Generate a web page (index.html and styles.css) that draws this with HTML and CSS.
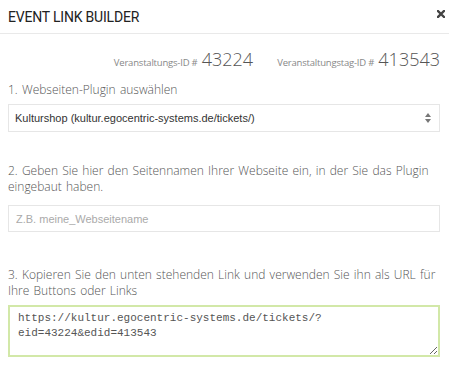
FILE: index.html
```html
<!DOCTYPE html>
<html lang="de">
<head>
  <meta charset="UTF-8" />
  <title>Event Link Builder</title>
  <link rel="stylesheet" href="styles.css">
</head>
<body>
  <div class="modal">
    <div class="modal-header">
      <h4>EVENT LINK BUILDER</h4>
      <svg class="close" width="8" height="8" viewBox="0 0 8 8">
        <path d="M1 1 L7 7 M7 1 L1 7" stroke="#444" stroke-width="2.4" stroke-linecap="square"/>
      </svg>
    </div>
    <div class="modal-body">
      <div class="ids">
        <span class="id-label">Veranstaltungs-ID #</span> <span class="id-num">43224</span>
        <span class="id-label gap">Veranstaltungstag-ID #</span> <span class="id-num">413543</span>
      </div>
      <label class="step">1. Webseiten-Plugin auswählen</label>
      <div class="select">
        <span>Kulturshop (kultur.egocentric-systems.de/tickets/)</span>
        <svg class="arrows" width="6" height="10" viewBox="0 0 6 10">
          <path d="M3 0 L6 4 L0 4 Z M0 6 L6 6 L3 10 Z" fill="#777"/>
        </svg>
      </div>
      <label class="step">2. Geben Sie hier den Seitennamen Ihrer Webseite ein, in der Sie das Plugin eingebaut haben.</label>
      <input class="field" type="text" placeholder="Z.B. meine_Webseitename">
      <label class="step">3. Kopieren Sie den unten stehenden Link und verwenden Sie ihn als URL für Ihre Buttons oder Links</label>
      <textarea class="link">https://kultur.egocentric-systems.de/tickets/?eid=43224&amp;edid=413543</textarea>
    </div>
  </div>
</body>
</html>
```

FILE: styles.css
```css
body {
  margin: 0;
  background: #fff;
  font-family: "Open Sans", sans-serif;
  color: #666;
}
.modal-header {
  display: flex;
  align-items: center;
  justify-content: space-between;
  height: 33px;
  padding: 0 4px 0 8px;
  border-bottom: 1px solid #e9e9e9;
}
.modal-header h4 {
  margin: 0;
  font-family: Roboto, sans-serif;
  font-weight: 400;
  font-size: 14px;
  color: #222;
  letter-spacing: -0.2px;
}
.close {
  margin-bottom: 5px;
}
.modal-body {
  padding: 15px 9px 0 8px;
}
.ids {
  text-align: right;
  line-height: 20px;
  margin-bottom: 9px;
}
.id-label {
  font-size: 9.5px;
  color: #888;
  letter-spacing: -0.2px;
}
.id-label.gap {
  margin-left: 20px;
}
.id-num {
  font-size: 18px;
  font-weight: 300;
  color: #555;
}
.step {
  display: block;
  font-size: 12px;
  font-weight: 300;
  line-height: 16px;
  word-spacing: 1.1px;
  color: #555;
  margin-bottom: 6px;
}
.select {
  box-sizing: border-box;
  display: flex;
  align-items: center;
  justify-content: space-between;
  height: 28px;
  padding: 0 8px 0 6px;
  border: 1px solid #e6e6e6;
  font-family: "Liberation Sans", Arial, sans-serif;
  font-size: 11px;
  color: #333;
  margin: 6px 0 31px;
}
.field {
  display: block;
  box-sizing: border-box;
  width: 100%;
  height: 27px;
  padding: 0 7px;
  border: 1px solid #e6e6e6;
  font-family: "Liberation Sans", Arial, sans-serif;
  font-size: 11px;
  margin: 10px 0 35px;
}
.field::placeholder {
  color: #aaa;
}
.link {
  display: block;
  box-sizing: border-box;
  width: 100%;
  height: 52px;
  padding: 4px 8px;
  border: 2px solid #d2e8a8;
  font-family: "Liberation Mono", monospace;
  font-size: 11px;
  line-height: 15px;
  color: #555;
  resize: vertical;
  margin: 0;
}
```
